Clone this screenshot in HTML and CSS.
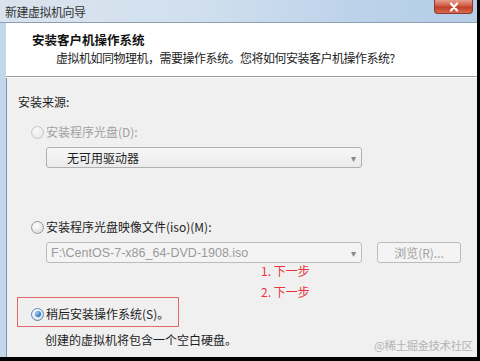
FILE: index.html
```html
<!DOCTYPE html>
<html lang="zh-CN">
<head>
  <meta charset="UTF-8">
  <title>新建虚拟机向导</title>
  <link rel="stylesheet" href="styles.css">
</head>
<body>

<div class="window">
  <div class="titlebar">
    <span class="title">新建虚拟机向导</span>
    <div class="close-btn">
      <svg width="14" height="10" viewBox="0 0 14 10"><path d="M4 1.5 L10 8.5 M10 1.5 L4 8.5" stroke="#fff" stroke-width="2.2" stroke-linecap="round"/></svg>
    </div>
  </div>

  <div class="client">
    <div class="header">
      <div class="header-title">安装客户机操作系统</div>
      <div class="header-sub">虚拟机如同物理机，需要操作系统。您将如何安装客户机操作系统?</div>
    </div>

    <div class="content">
      <div class="section-label">安装来源:</div>

      <div class="radio-row disabled">
        <span class="radio"></span>
        <span>安装程序光盘(D):</span>
      </div>
      <div class="select disabled-select">
        <span class="select-text">无可用驱动器</span>
        <span class="arrow">▾</span>
      </div>

      <div class="radio-row row-iso">
        <span class="radio"></span>
        <span>安装程序光盘映像文件(iso)(M):</span>
      </div>
      <div class="iso-line">
        <div class="select combo">
          <span class="select-text path">F:\CentOS-7-x86_64-DVD-1908.iso</span>
          <span class="arrow">▾</span>
        </div>
        <div class="btn">浏览(R)...</div>
      </div>

      <div class="radio-row row-later">
        <span class="radio checked"></span>
        <span>稍后安装操作系统(S)。</span>
      </div>
      <div class="note">创建的虚拟机将包含一个空白硬盘。</div>

      <!-- annotations drawn on the screenshot -->
      <div class="mark-box"></div>
      <div class="step step1">1. 下一步</div>
      <div class="step step2">2. 下一步</div>
      <div class="watermark">@稀土掘金技术社区</div>
    </div>
  </div>
</div>

</body>
</html>
```

FILE: styles.css
```css
html, body { margin: 0; padding: 0; }
body {
  background: #000;
  width: 480px;
  height: 361px;
  overflow: hidden;
  font-family: "Noto Sans CJK SC", "Liberation Sans", sans-serif;
  font-size: 12px;
  color: #1e1e1e;
}

.window {
  width: 477px;
  height: 357px;
  display: flex;
  flex-direction: column;
  background: #f0f0f0;
  overflow: hidden;
}

.titlebar {
  height: 22px;
  flex: none;
  display: flex;
  align-items: center;
  position: relative;
  background: linear-gradient(90deg, #d9e3ee 0%, #d2e0ee 40%, #bcd2ea 75%, #b5cde8 100%);
  border-bottom: 1px solid #8d9fb3;
}
.title {
  padding-left: 5px;
  font-size: 12px;
  color: #333;
  letter-spacing: -0.5px;
}
.close-btn {
  position: absolute;
  right: 4px;
  top: 0;
  width: 39px;
  height: 14px;
  border: 1px solid #8a3a2e;
  border-top: none;
  border-radius: 0 0 4px 4px;
  background: linear-gradient(#e6a090 0%, #cf5a42 45%, #c0402a 55%, #d76a4e 100%);
  display: flex;
  align-items: center;
  justify-content: center;
  box-sizing: border-box;
}

.client {
  flex: 1;
  display: flex;
  flex-direction: column;
  border-left: 6px solid #c3d7ec;
  box-shadow: inset 1px 0 0 #7f93aa;
}

.header {
  height: 54px;
  flex: none;
  background: #fff;
  border-bottom: 1px solid #a0a0a0;
  box-shadow: 0 1px 0 #fff;
  box-sizing: border-box;
  padding-top: 9px;
}
.header-title {
  padding-left: 26px;
  font-weight: bold;
  font-size: 12.5px;
  line-height: 16px;
  color: #111;
}
.header-sub {
  padding-left: 50px;
  margin-top: 2px;
  line-height: 16px;
  letter-spacing: -0.5px;
  color: #222;
}

.content {
  position: relative;
  flex: 1;
  padding-left: 12px;
}

.section-label {
  margin-top: 17px;
  line-height: 16px;
}

.radio-row {
  display: flex;
  align-items: center;
  gap: 2px;
  padding-left: 13px;
  line-height: 16px;
  margin-top: 14px;
}
.radio-row.disabled { color: #a0a0a0; }
.radio {
  width: 11px;
  height: 11px;
  border-radius: 50%;
  border: 1px solid #9a9a9a;
  background: radial-gradient(circle at 40% 35%, #fff 0%, #e6e6e6 60%, #cfcfcf 100%);
  box-sizing: content-box;
  position: relative;
}
.disabled .radio { border-color: #c8c8c8; background: radial-gradient(circle at 40% 35%, #fafafa, #e2e2e2); }
.radio.checked { border-color: #4a7fb5; }
.radio.checked::after {
  content: "";
  position: absolute;
  left: 2.5px;
  top: 2.5px;
  width: 6px;
  height: 6px;
  border-radius: 50%;
  background: radial-gradient(circle at 35% 35%, #9fd4ff, #1f6fc4 70%);
}

.select {
  width: 316px;
  height: 21px;
  box-sizing: border-box;
  border: 1px solid #b0b0b0;
  border-radius: 3px;
  background: linear-gradient(#f7f7f7, #ebebeb);
  display: flex;
  align-items: center;
  justify-content: space-between;
}
.disabled-select {
  margin-left: 28px;
  margin-top: 7px;
}
.select-text { padding-left: 20px; color: #1e1e1e; }
.arrow {
  font-size: 10px;
  color: #888;
  padding-right: 5px;
}

.row-iso { margin-top: 51px; }

.iso-line {
  display: flex;
  gap: 15px;
  margin-left: 28px;
  margin-top: 7px;
}
.combo {
  background: #f4f4f4;
  border-color: #bcbcbc;
}
.path {
  padding-left: 4px;
  color: #9a9a9a;
  font-family: "Liberation Sans", "Noto Sans CJK SC", sans-serif;
  font-size: 12.5px;
}
.btn {
  width: 84px;
  height: 21px;
  box-sizing: border-box;
  border: 1px solid #bcbcbc;
  border-radius: 3px;
  background: #f4f4f4;
  color: #a0a0a0;
  display: flex;
  align-items: center;
  justify-content: center;
}

.row-later { margin-top: 43px; }
.row-later .radio { border-color: #5a88b8; }

.note {
  margin-left: 27px;
  margin-top: 10px;
  line-height: 16px;
}

.mark-box {
  position: absolute;
  left: 11px;
  top: 220px;
  width: 162px;
  height: 30px;
  border: 1px solid #e26a6a;
  box-sizing: border-box;
}
.step {
  position: absolute;
  left: 255px;
  color: #e8343a;
  font-size: 12px;
  line-height: 14px;
}
.step1 { top: 187px; }
.step2 { top: 208px; }
.watermark {
  position: absolute;
  left: 368px;
  top: 260px;
  white-space: nowrap;
  color: #b4b4b4;
  font-size: 11.5px;
  letter-spacing: -0.5px;
}
```
